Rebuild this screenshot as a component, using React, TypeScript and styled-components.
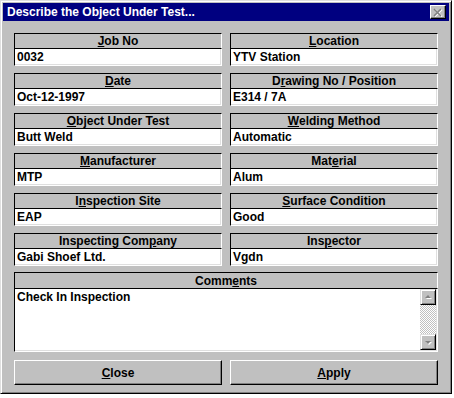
import React from 'react';
import styled, { createGlobalStyle } from 'styled-components';

const GlobalStyle = createGlobalStyle`
  body {
    margin: 0;
    background: #ffffff;
    font-family: 'Liberation Sans', Arial, sans-serif;
  }
`;

const Window = styled.div`
  box-sizing: border-box;
  width: 452px;
  height: 394px;
  background: #c0c0c0;
  border: 1px solid;
  border-color: #dfdfdf #000000 #000000 #dfdfdf;
  box-shadow: inset 1px 1px #ffffff, inset -1px -1px #808080;
  padding: 2px;
  display: flex;
  flex-direction: column;
`;

const TitleBar = styled.div`
  height: 18px;
  background: #000080;
  display: flex;
  align-items: center;
  justify-content: space-between;
  padding: 0 3px 0 4px;
`;

const Title = styled.span`
  color: #ffffff;
  font-weight: bold;
  font-size: 12px;
`;

const TitleButton = styled.div`
  box-sizing: border-box;
  width: 16px;
  height: 14px;
  background: #c0c0c0;
  border: 1px solid;
  border-color: #ffffff #000000 #000000 #ffffff;
  box-shadow: inset -1px -1px #808080;
  display: flex;
  align-items: center;
  justify-content: center;
`;

const Body = styled.div`
  flex: 1;
  display: flex;
  flex-direction: column;
  padding: 12px 11px 0 11px;
`;

const Grid = styled.div`
  display: grid;
  grid-template-columns: 1fr 1fr;
  column-gap: 8px;
  row-gap: 7px;
`;

const Field = styled.div`
  display: flex;
  flex-direction: column;
`;

const Header = styled.div<{ tall?: boolean }>`
  box-sizing: border-box;
  height: ${({ tall }) => (tall ? '16px' : '15px')};
  border-top: 1px solid #000000;
  border-left: 1px solid #000000;
  border-right: 1px solid #ffffff;
  background: #c0c0c0;
  display: flex;
  align-items: center;
  justify-content: center;
  font-weight: bold;
  font-size: 12px;
  color: #000000;
`;

const Input = styled.div`
  box-sizing: border-box;
  height: 18px;
  background: #ffffff;
  border: 1px solid;
  border-color: #000000 #ffffff #ffffff #000000;
  box-shadow: inset -1px -1px #dfdfdf;
  display: flex;
  align-items: center;
  padding-left: 2px;
  font-weight: bold;
  font-size: 12px;
  color: #000000;
`;

const Comments = styled.div`
  margin-top: 6px;
  display: flex;
  flex-direction: column;
`;

const TextArea = styled.div`
  box-sizing: border-box;
  height: 64px;
  background: #ffffff;
  border: 1px solid;
  border-color: #000000 #ffffff #ffffff #000000;
  box-shadow: inset -1px -1px #dfdfdf;
  display: flex;
  font-weight: bold;
  font-size: 12px;
`;

const TextContent = styled.div`
  flex: 1;
  padding: 1px 2px;
`;

const ScrollBar = styled.div`
  width: 16px;
  margin: 0 1px 1px 0;
  display: flex;
  flex-direction: column;
`;

const ScrollTrack = styled.div`
  flex: 1;
  background: repeating-conic-gradient(#c0c0c0 0 25%, #ffffff 0 50%) 0 0 / 2px 2px;
`;

const ArrowButton = styled.div`
  box-sizing: border-box;
  width: 16px;
  height: 16px;
  background: #c0c0c0;
  border: 1px solid;
  border-color: #dfdfdf #000000 #000000 #dfdfdf;
  box-shadow: inset 1px 1px #ffffff, inset -1px -1px #808080;
  display: flex;
  align-items: center;
  justify-content: center;
`;

const ButtonRow = styled.div`
  margin-top: 8px;
  display: grid;
  grid-template-columns: 1fr 1fr;
  column-gap: 8px;
`;

const Button = styled.button`
  box-sizing: border-box;
  height: 25px;
  background: #c0c0c0;
  border: 1px solid;
  border-color: #ffffff #000000 #000000 #ffffff;
  box-shadow: inset -1px -1px #808080;
  font-family: 'Liberation Sans', Arial, sans-serif;
  font-weight: bold;
  font-size: 12px;
  color: #000000;
  padding: 0;
`;

const Key = styled.span`
  text-decoration: underline;
`;

function Label({ text, hot }: { text: string; hot: number }): JSX.Element {
  return (
    <>
      {text.slice(0, hot)}
      <Key>{text[hot]}</Key>
      {text.slice(hot + 1)}
    </>
  );
}

const fields = [
  { label: 'Job No', hot: 0, value: '0032' },
  { label: 'Location', hot: 0, value: 'YTV Station' },
  { label: 'Date', hot: 0, value: 'Oct-12-1997' },
  { label: 'Drawing No / Position', hot: 1, value: 'E314 / 7A' },
  { label: 'Object Under Test', hot: 0, value: 'Butt Weld' },
  { label: 'Welding Method', hot: 0, value: 'Automatic' },
  { label: 'Manufacturer', hot: 0, value: 'MTP' },
  { label: 'Material', hot: 3, value: 'Alum' },
  { label: 'Inspection Site', hot: 1, value: 'EAP' },
  { label: 'Surface Condition', hot: 0, value: 'Good' },
  { label: 'Inspecting Company', hot: 14, value: 'Gabi Shoef Ltd.' },
  { label: 'Inspector', hot: 3, value: 'Vgdn' },
];

function Arrow({ down }: { down?: boolean }): JSX.Element {
  const pts = down ? '2,2 8,2 5,5' : '5,1 8,4 2,4';
  return (
    <svg width="10" height="7" viewBox="0 0 10 7">
      <polygon points={pts} fill="#ffffff" transform="translate(1,1)" />
      <polygon points={pts} fill="#808080" />
    </svg>
  );
}

function App(): JSX.Element {
  return (
    <>
      <GlobalStyle />
      <Window>
        <TitleBar>
          <Title>Describe the Object Under Test...</Title>
          <TitleButton>
            <svg width="10" height="9" viewBox="0 0 10 9">
              <path d="M1 1 L8 8 M8 1 L1 8" stroke="#ffffff" strokeWidth="1.6" transform="translate(1,0.5)" />
              <path d="M1 1 L8 8 M8 1 L1 8" stroke="#808080" strokeWidth="1.6" />
            </svg>
          </TitleButton>
        </TitleBar>
        <Body>
          <Grid>
            {fields.map((f) => (
              <Field key={f.label}>
                <Header>
                  <Label text={f.label} hot={f.hot} />
                </Header>
                <Input>{f.value}</Input>
              </Field>
            ))}
          </Grid>
          <Comments>
            <Header tall>
              <Label text="Comments" hot={4} />
            </Header>
            <TextArea>
              <TextContent>Check In Inspection</TextContent>
              <ScrollBar>
                <ArrowButton>
                  <Arrow />
                </ArrowButton>
                <ScrollTrack />
                <ArrowButton>
                  <Arrow down />
                </ArrowButton>
              </ScrollBar>
            </TextArea>
          </Comments>
          <ButtonRow>
            <Button>
              <Label text="Close" hot={0} />
            </Button>
            <Button>
              <Label text="Apply" hot={0} />
            </Button>
          </ButtonRow>
        </Body>
      </Window>
    </>
  );
}

export default App;
